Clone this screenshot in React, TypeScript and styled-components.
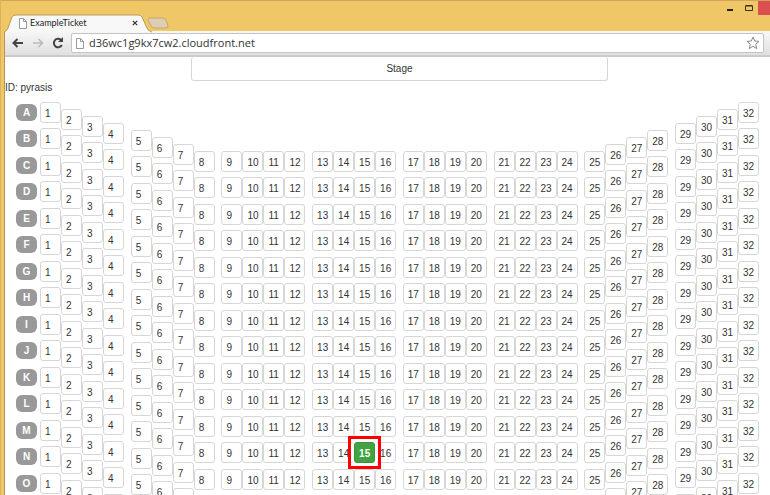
import React from "react";
import styled, { createGlobalStyle, css } from "styled-components";

const GlobalStyle = createGlobalStyle`
  *, *::before, *::after { box-sizing: border-box; }
  body {
    margin: 0;
    overflow: hidden;
    background: #fff;
    color: #333;
    font: 10px/14px "Liberation Sans", Arial, sans-serif;
  }
  button, input { font: inherit; color: inherit; margin: 0; }
`;

const Window = styled.div`
  height: 100vh;
  display: flex;
  flex-direction: column;
  overflow: hidden;
  background: #efc766;
  border-top: 1px solid #cfa75c;
  border-left: 1px solid #dcb35a;
`;

const TitleBar = styled.header`
  display: flex;
  justify-content: space-between;
  align-items: flex-start;
  height: 30px;
  flex: none;
`;

const TabStrip = styled.div`
  display: flex;
  padding: 13px 0 0 3px;
`;

const Tab = styled.div`
  position: relative;
  display: flex;
  align-items: center;
  width: 144px;
  height: 18px;
  padding: 0 10px 0 14px;
  font: 9px/16px Lato, "Open Sans", sans-serif;
  color: #222;
`;

const TabShape = styled.svg`
  position: absolute;
  inset: 0;
`;

const TabTitle = styled.span`
  position: relative;
  flex: 1;
  margin-left: 2px;
  white-space: nowrap;
`;

const IconButton = styled.button`
  position: relative;
  display: grid;
  place-items: center;
  flex: none;
  padding: 0;
  border: 0;
  background: none;
`;

const Controls = styled.div`
  display: flex;
  align-items: flex-start;
`;

const WindowButton = styled(IconButton)<{ $close?: boolean }>`
  width: ${(p) => (p.$close ? 12 : 19)}px;
  height: 14px;
  background: ${(p) => (p.$close ? "#dc4f4f" : "none")};
`;

const Body = styled.div`
  flex: 1;
  min-height: 0;
  display: flex;
  flex-direction: column;
  margin-left: 3px;
  border-left: 1px solid #b89550;
`;

const Toolbar = styled.nav`
  display: flex;
  align-items: center;
  gap: 2px;
  flex: none;
  height: 26px;
  padding: 0 6px 0 4px;
  background: linear-gradient(#f7f7f7, #e0e0e0);
  border-bottom: 2px solid #cbcbcb;
`;

const NavButton = styled(IconButton)`
  width: 18px;
  height: 18px;
`;

const AddressBar = styled.div`
  flex: 1;
  display: flex;
  align-items: center;
  height: 20px;
  margin-left: 2px;
  padding: 0 3px;
  gap: 4px;
  background: #fff;
  border: 1px solid #c4c4c4;
  border-radius: 2px;
`;

const Address = styled.input`
  flex: 1;
  min-width: 0;
  padding: 0;
  border: 0;
  outline: 0;
  background: none;
  font: 11px/16px "Open Sans", "Noto Sans", sans-serif;
  color: #333;
`;

const Page = styled.main`
  flex: 1;
  min-height: 0;
  overflow: hidden;
  background: #fff;
`;

const StageArea = styled.div`
  display: flex;
  justify-content: center;
  padding: 0 11px 0 35px;
`;

const Stage = styled.div`
  width: 58%;
  padding: 5px 0 4px;
  text-align: center;
  border: 1px solid #d6d6d6;
  border-top: 0;
  border-radius: 3px;
`;

const UserId = styled.p`
  margin: 0 0 7px;
`;

const SeatMap = styled.div`
  display: flex;
  gap: 3px;
  padding: 0 11px;
`;

const Groups = styled.div`
  flex: 1;
  display: flex;
  justify-content: space-between;
  align-items: flex-start;
`;

const Group = styled.div`
  display: flex;
  align-items: flex-start;
`;

const Column = styled.div<{ $drop?: number }>`
  display: flex;
  flex-direction: column;
  padding-top: ${(p) => p.$drop ?? 0}px;
`;

const Cell = styled.div`
  display: flex;
  align-items: center;
  height: 21px;
  margin-bottom: 5px;
  &:nth-child(even) { margin-bottom: 6px; }
`;

const RowLabel = styled.span`
  width: 21px;
  height: 17px;
  border-radius: 6px;
  background: #999;
  color: #fff;
  font-weight: bold;
  line-height: 17px;
  text-align: center;
`;

const Seat = styled.button<{ $selected: boolean }>`
  width: 21px;
  height: 21px;
  padding: 2px 0 0 4px;
  border: 1px solid #d6d6d6;
  border-radius: 3px;
  background: #fff;
  text-align: left;
  ${(p) =>
    p.$selected &&
    css`
      position: relative;
      z-index: 1;
      border-color: #3a933a;
      background: #41a341;
      color: #fff;
      font-weight: bold;
      box-shadow: 0 0 0 2px #fff;

      &::after {
        content: "";
        position: absolute;
        inset: -7px;
        border: 3px solid #f00;
      }
    `}
`;

const ROWS = "ABCDEFGHIJKLMNO".split("");
const GROUPS = Array.from({ length: 8 }, (_, g) =>
  Array.from({ length: 4 }, (_, i) => g * 4 + i + 1),
);
const STEP = 7;
const dropOf = (seat: number) => STEP * Math.min(seat - 1, 32 - seat, 7);

const PageIcon = () => (
  <svg width="10" height="11" viewBox="0 0 10 11" fill="#fff" stroke="#999">
    <path d="M1.5 .5h4l3 3v7h-7zM5.5 .5v3h3" />
  </svg>
);

export default function App() {
  const [selected, setSelected] = React.useState("L15");
  return (
    <>
      <GlobalStyle />
      <Window>
        <TitleBar>
          <TabStrip>
            <Tab>
              <TabShape width="170" height="18" viewBox="0 0 170 18" overflow="visible">
                <path d="M0 18Q3 17 4 14L8 3Q9 1 12 1H134Q137 1 138 3L143 14Q144 17 148 18" fill="#f8f8f8" stroke="#b99a57" />
                <path d="M145 4h14q2 0 3 2l2 6q0 2-2 2h-12q-2 0-3-2l-3-6q0-2 1-2z" fill="#dccdb4" stroke="#c4a66c" />
              </TabShape>
              <IconButton as="span"><PageIcon /></IconButton>
              <TabTitle>ExampleTicket</TabTitle>
              <IconButton aria-label="Close tab">
                <svg width="6" height="6" viewBox="0 0 6 6" stroke="#333" strokeWidth="1.2"><path d="M.8 .8l4.4 4.4M5.2 .8L.8 5.2" /></svg>
              </IconButton>
            </Tab>
          </TabStrip>
          <Controls>
            <WindowButton aria-label="Minimize">
              <svg width="6" height="8" viewBox="0 0 6 8"><path d="M0 6h6" stroke="#222" strokeWidth="2" /></svg>
            </WindowButton>
            <WindowButton aria-label="Maximize">
              <svg width="8" height="6" viewBox="0 0 8 6" fill="none" stroke="#3b3016"><path d="M.5 1h7v4.5h-7zM.5 .5h7" /></svg>
            </WindowButton>
            <WindowButton $close aria-label="Close window" />
          </Controls>
        </TitleBar>
        <Body>
          <Toolbar>
            <NavButton aria-label="Back">
              <svg width="12" height="10" viewBox="0 0 12 10" fill="none" stroke="#444" strokeWidth="2"><path d="M11 5H2M5.5 1L1.5 5l4 4" /></svg>
            </NavButton>
            <NavButton aria-label="Forward">
              <svg width="12" height="10" viewBox="0 0 12 10" fill="none" stroke="#bbb" strokeWidth="1.6"><path d="M1 5h9M6.5 1l4 4-4 4" /></svg>
            </NavButton>
            <NavButton aria-label="Reload">
              <svg width="12" height="12" viewBox="0 0 12 12" fill="none" stroke="#444" strokeWidth="2"><path d="M9.8 8A4.2 4.2 0 1 1 9 3" /><path d="M11 0v5H6z" fill="#444" stroke="none" /></svg>
            </NavButton>
            <AddressBar>
              <PageIcon />
              <Address aria-label="Address" defaultValue="d36wc1g9kx7cw2.cloudfront.net" />
              <IconButton aria-label="Bookmark">
                <svg width="14" height="14" viewBox="0 0 14 14" fill="#fff" stroke="#888"><path d="M7 1l1.700 4 4.300.4-3.300 2.900 1 4.300L7 10.300l-3.700 2.300 1-4.300L1 5.400 5.300 5z" /></svg>
              </IconButton>
            </AddressBar>
          </Toolbar>
          <Page>
            <StageArea><Stage>Stage</Stage></StageArea>
            <UserId>ID: pyrasis</UserId>
            <SeatMap>
              <Column>
                {ROWS.map((row) => (
                  <Cell key={row}><RowLabel>{row}</RowLabel></Cell>
                ))}
              </Column>
              <Groups>
                {GROUPS.map((seats) => (
                  <Group key={seats[0]}>
                    {seats.map((n) => (
                      <Column key={n} $drop={dropOf(n)}>
                        {ROWS.map((row) => (
                          <Cell key={row}>
                            <Seat
                              $selected={selected === row + n}
                              aria-label={`Seat ${row}${n}`}
                              aria-pressed={selected === row + n}
                              onClick={() => setSelected(row + n)}
                            >
                              {n}
                            </Seat>
                          </Cell>
                        ))}
                      </Column>
                    ))}
                  </Group>
                ))}
              </Groups>
            </SeatMap>
          </Page>
        </Body>
      </Window>
    </>
  );
}
